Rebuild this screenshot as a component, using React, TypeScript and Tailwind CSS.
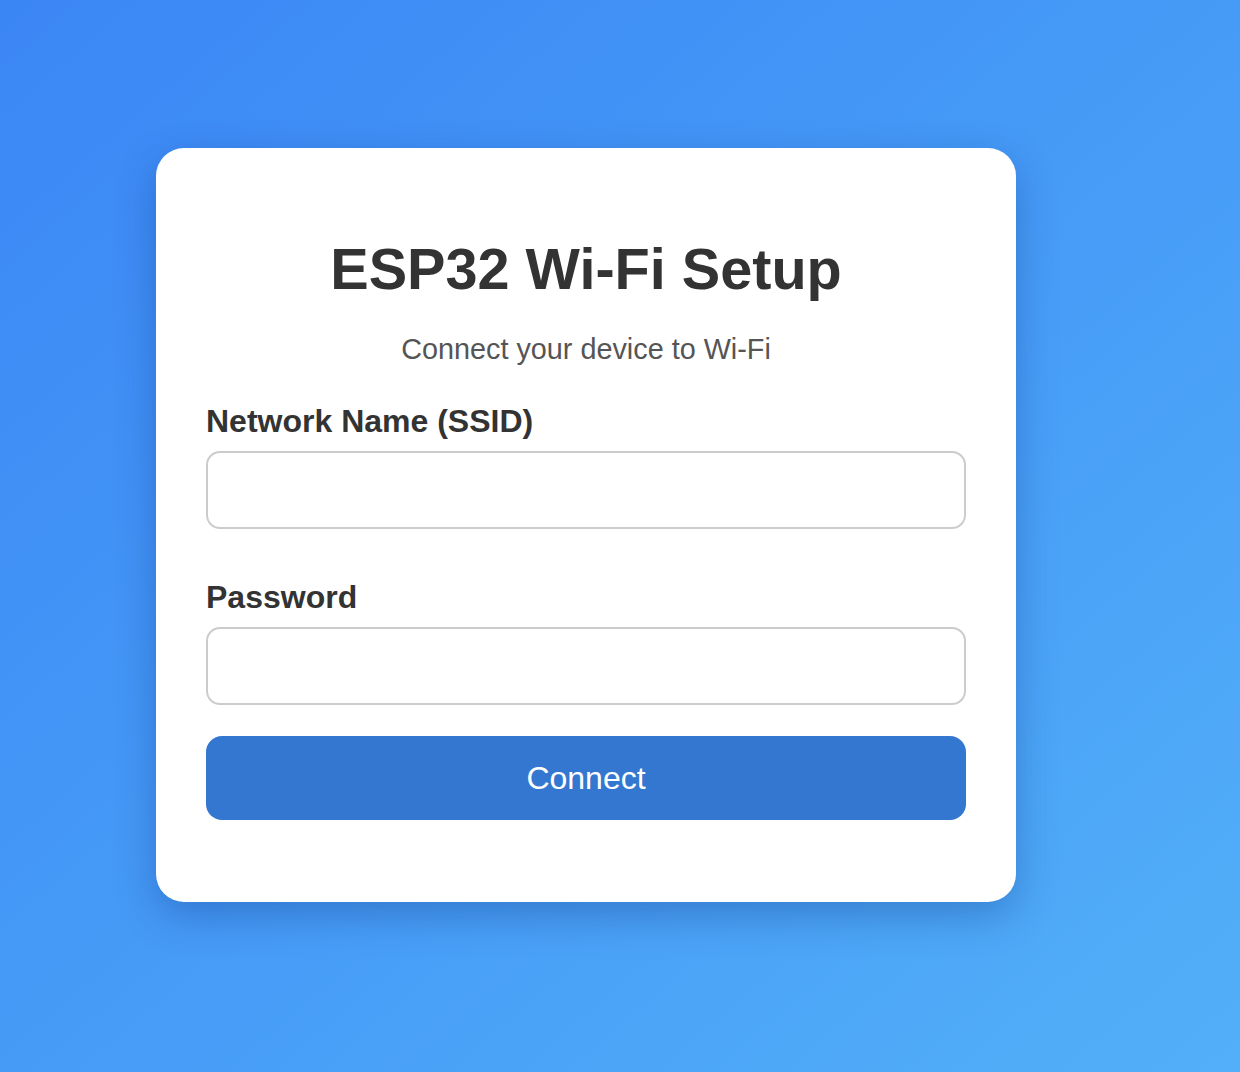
export default function App() {
  return (
    <div className="min-h-screen bg-linear-to-br from-[#3b86f5] to-[#53aff8] pl-[156px] pt-[148px] pb-[170px] font-['Liberation_Sans',Arial,sans-serif]">
      <div className="w-[860px] rounded-[28px] bg-white px-[50px] pt-[88px] pb-[82px] shadow-[0_14px_40px_rgba(0,40,120,0.3)]">
        <h1 className="text-center text-[57.6px] font-bold leading-[66px] text-[#333]">ESP32 Wi-Fi Setup</h1>
        <p className="mt-[31px] text-center text-[28.8px] leading-[33px] text-[#555]">Connect your device to Wi-Fi</p>
        <form onSubmit={(e) => e.preventDefault()}>
          <label className="mt-[37px] block text-[32px] font-bold leading-[37px] text-[#333]">Network Name (SSID)</label>
          <input
            type="text"
            className="mt-[11px] block h-[78px] w-full rounded-[14px] border-2 border-[#ccc] bg-white px-5 text-[28px] outline-none"
          />
          <label className="mt-[50px] block text-[32px] font-bold leading-[37px] text-[#333]">Password</label>
          <input
            type="password"
            className="mt-[11px] block h-[78px] w-full rounded-[14px] border-2 border-[#ccc] bg-white px-5 text-[28px] outline-none"
          />
          <button
            type="submit"
            className="mt-[31px] block h-[84px] w-full rounded-[16px] bg-[#3477d0] text-[32px] leading-none text-white"
          >
            Connect
          </button>
        </form>
      </div>
    </div>
  );
}
